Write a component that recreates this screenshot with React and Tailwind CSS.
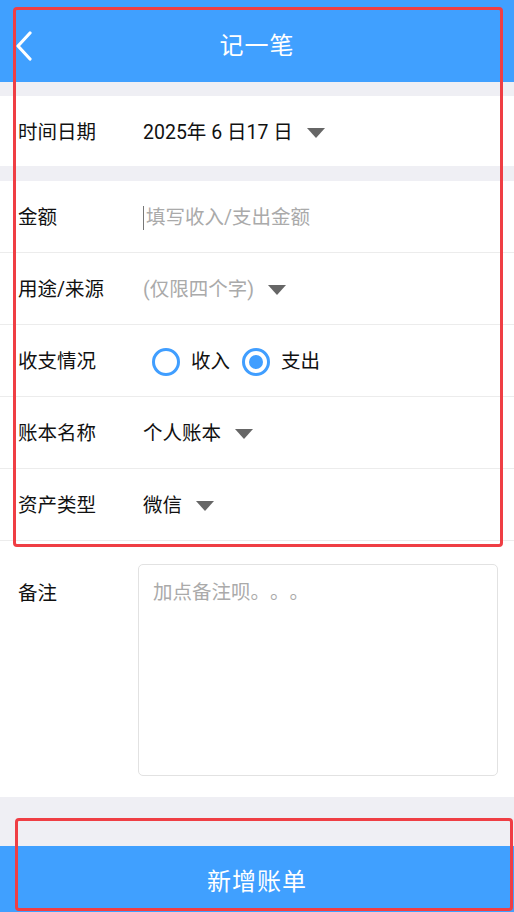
import React from "react";

const Caret = () => (
  <svg width="18" height="10" viewBox="0 0 18 10" className="ml-[14px]">
    <path d="M0 0 H18 L9 10 Z" fill="#666" />
  </svg>
);

const Row = ({ label, children }) => (
  <div className="h-[72px] flex items-center pl-[18px] pt-[3px] border-b border-[#ececec]">
    <div className="w-[125px] text-[19.5px] text-[#111]">{label}</div>
    <div className="flex items-center text-[19.5px]">{children}</div>
  </div>
);

const Radio = ({ checked, label }) => (
  <div className="flex items-center">
    <div className="w-[28px] h-[28px] rounded-full border-[3px] border-[#409eff] flex items-center justify-center">
      {checked && <div className="w-[14px] h-[14px] rounded-full bg-[#409eff]" />}
    </div>
    <span className="ml-[11px] text-[19.5px] text-[#111]">{label}</span>
  </div>
);

export default function App() {
  return (
    <div
      className="relative w-[514px] h-[912px] bg-[#efeff4] overflow-hidden [text-spacing-trim:space-all]"
      style={{ fontFamily: 'Roboto, "Noto Sans CJK SC", "Noto Sans", sans-serif' }}
    >
      {/* Header */}
      <div className="relative h-[82px] bg-[#40a0ff] flex items-center justify-center">
        <svg width="18" height="30" viewBox="0 0 18 30" className="absolute left-[15px] top-[31px]">
          <path d="M15 2 L3 15 L15 28" fill="none" stroke="#fff" strokeWidth="3.2" strokeLinecap="round" strokeLinejoin="round" />
        </svg>
        <span className="text-white text-[24px] mt-[9px] tracking-[1px]">记一笔</span>
      </div>

      <div className="h-[14px]" />

      {/* Date */}
      <div className="h-[70px] bg-white flex items-center pl-[18px] pt-[3px]">
        <div className="w-[125px] text-[19.5px] text-[#111]">时间日期</div>
        <div className="flex items-center text-[19.5px] text-[#111]">
          <span>2025年 6 日17 日</span>
          <Caret />
        </div>
      </div>

      <div className="h-[15px]" />

      <div className="bg-white">
        <Row label="金额">
          <span className="w-px h-[24px] bg-[#777] mr-[2px]" />
          <span className="text-[#aaa]">填写收入/支出金额</span>
        </Row>
        <Row label="用途/来源">
          <span className="text-[#aaa]">(仅限四个字)</span>
          <Caret />
        </Row>
        <Row label="收支情况">
          <div className="flex items-center gap-[12px] ml-[9px]">
            <Radio label="收入" />
            <Radio checked label="支出" />
          </div>
        </Row>
        <Row label="账本名称">
          <span className="text-[#111]">个人账本</span>
          <Caret />
        </Row>
        <Row label="资产类型">
          <span className="text-[#111]">微信</span>
          <Caret />
        </Row>

        {/* Remark */}
        <div className="flex pt-[23px] pb-[21px] pl-[18px] pr-[16px]">
          <div className="w-[120px] text-[19.5px] text-[#111] pt-[15px]">备注</div>
          <div className="flex-1 h-[212px] border border-[#e2e2e2] rounded-[5px] px-[14px] py-[14px] text-[19.5px] text-[#aaa] leading-[28px]">
            加点备注呗。。。
          </div>
        </div>
      </div>

      <div className="h-[49px]" />

      <button className="w-full h-[66px] bg-[#40a0ff] text-white text-[24px] tracking-[1px] pt-[5px] flex items-center justify-center">
        新增账单
      </button>

      {/* Annotation overlays */}
      <div className="absolute left-[13px] top-[7px] w-[490px] h-[540px] border-[3px] border-[#ef3e44] rounded-[4px] pointer-events-none" />
      <div className="absolute left-[15px] top-[818px] w-[498px] h-[93px] border-[3px] border-[#ef3e44] rounded-[4px] pointer-events-none" />
    </div>
  );
}
